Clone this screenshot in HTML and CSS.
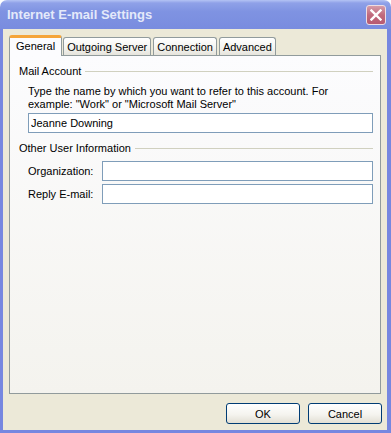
FILE: index.html
```html
<!DOCTYPE html>
<html lang="en">
  <head>
    <meta charset="UTF-8" />
    <title>Internet E-mail Settings</title>
    <link rel="stylesheet" href="styles.css">
  </head>
  <body>
    <div class="window">
      <div class="titlebar">
        <span class="title">Internet E-mail Settings</span>
        <span class="close">
          <svg width="12" height="12" viewBox="0 0 12 12">
            <path d="M1.5 1.5 L10.5 10.5 M10.5 1.5 L1.5 10.5" stroke="#fff" stroke-width="2.4" stroke-linecap="square" />
          </svg>
        </span>
      </div>

      <div class="frame">
        <div class="tabs">
          <div class="tab active">General</div>
          <div class="tab">Outgoing Server</div>
          <div class="tab">Connection</div>
          <div class="tab">Advanced</div>
        </div>

        <div class="panel">
          <div class="group-title"><span>Mail Account</span></div>
          <div class="group">
            <p class="hint">
              Type the name by which you want to refer to this account. For<br />
              example: "Work" or "Microsoft Mail Server"
            </p>
            <input class="field" type="text" value="Jeanne Downing" />
          </div>

          <div class="group-title spaced"><span>Other User Information</span></div>
          <div class="group rows">
            <label class="row">
              <span class="row-label">Organization:</span>
              <input class="field" type="text" />
            </label>
            <label class="row">
              <span class="row-label">Reply E-mail:</span>
              <input class="field" type="text" />
            </label>
          </div>
        </div>

        <div class="buttons">
          <button>OK</button>
          <button>Cancel</button>
        </div>
      </div>
    </div>
  </body>
</html>
```

FILE: styles.css
```css
body {
  margin: 0;
  background: #ffffff;
  font-family: "Liberation Sans", Arial, sans-serif;
  font-size: 11px;
  color: #000000;
}
.window {
  width: 391px;
  height: 433px;
  display: flex;
  flex-direction: column;
}
.titlebar {
  height: 29px;
  flex-shrink: 0;
  display: flex;
  align-items: center;
  justify-content: space-between;
  padding: 0 5px 0 7px;
  box-sizing: border-box;
  border-radius: 7px 7px 0 0;
  background: linear-gradient(#b4c3f4 0, #8fa1e8 3px, #7f93e2 40%, #798cdf 100%);
}
.title {
  font-size: 13px;
  font-weight: bold;
  color: #e4e9fa;
}
.close {
  width: 20px;
  height: 20px;
  box-sizing: border-box;
  display: flex;
  align-items: center;
  justify-content: center;
  border: 1px solid #eedde3;
  border-radius: 3px;
  background: linear-gradient(#d69ca9, #c06a7d 50%, #b85a70);
}
.frame {
  flex: 1;
  display: flex;
  flex-direction: column;
  background: #ece9d8;
  border: solid #7687e0;
  border-width: 0 4px 3px 3px;
  padding: 6px 6px 6px 6px;
}
/* Tabs */
.tabs {
  display: flex;
  align-items: flex-end;
  gap: 1px;
  height: 20px;
}
.tab {
  height: 18px;
  box-sizing: border-box;
  padding: 0 3px;
  display: flex;
  align-items: center;
  border: 1px solid #919b9c;
  border-bottom: none;
  border-radius: 3px 3px 0 0;
  background: linear-gradient(#ffffff, #f3f3ef 60%, #e6e4dc);
}
.tab + .tab {
  margin-left: 1px;
}
.tab.active + .tab {
  margin-left: 0;
}
.tab.active {
  height: 21px;
  margin-bottom: -1px;
  padding: 0 6px 2px;
  position: relative;
  z-index: 1;
  border-top: 3px solid #f5a53a;
  background: #fcfcfe;
}
/* Panel */
.panel {
  flex: 1;
  border: 1px solid #919b9c;
  background: linear-gradient(#fcfcfe, #f4f3ee);
  padding: 9px 7px 0 9px;
}
.group-title {
  display: flex;
  align-items: center;
  gap: 4px;
  line-height: 13px;
}
.group-title::after {
  content: "";
  flex: 1;
  border-top: 1px solid #d0d0bf;
}
.group-title.spaced {
  margin-top: 9px;
}
.group {
  margin-left: 9px;
}
.hint {
  margin: 7px 0 2px;
  line-height: 13px;
}
.field {
  display: block;
  width: 100%;
  height: 20px;
  box-sizing: border-box;
  margin: 0;
  padding: 0 2px;
  border: 1px solid #7f9db9;
  background: #ffffff;
  font-family: "Liberation Sans", Arial, sans-serif;
  font-size: 11px;
  color: #000000;
}
.rows {
  display: flex;
  flex-direction: column;
  gap: 3px;
  margin-top: 6px;
}
.row {
  display: flex;
  align-items: center;
}
.row-label {
  width: 74px;
  flex-shrink: 0;
}
.row .field {
  flex: 1;
}
/* Buttons */
.buttons {
  display: flex;
  justify-content: flex-end;
  gap: 8px;
  margin: 9px -1px 0 0;
}
button {
  width: 74px;
  height: 21px;
  padding: 0;
  border: 1px solid #003c74;
  border-radius: 3px;
  background: linear-gradient(#ffffff, #f5f4ef 55%, #e2dfd4);
  font-family: "Liberation Sans", Arial, sans-serif;
  font-size: 11px;
  color: #000000;
}
```
